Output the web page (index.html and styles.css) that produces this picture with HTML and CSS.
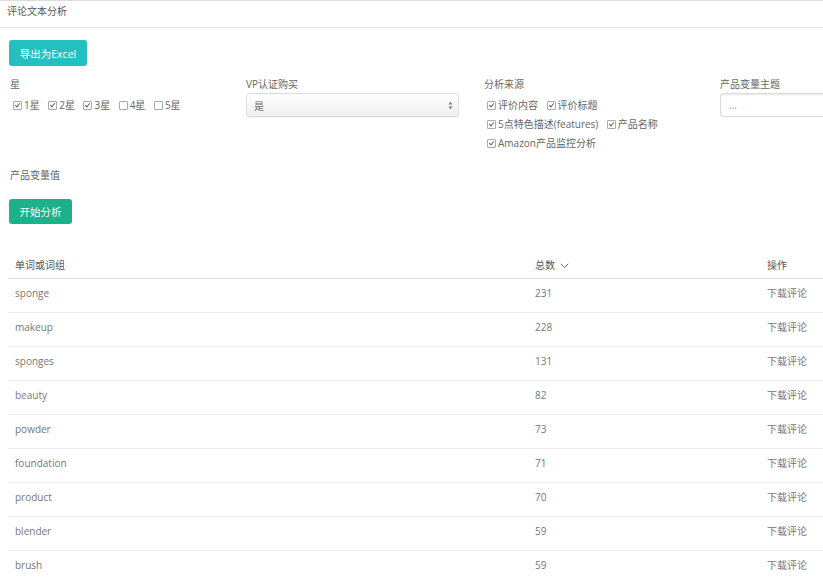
FILE: index.html
```html
<!DOCTYPE html>
<html lang="zh-CN">
<head>
  <meta charset="UTF-8">
  <title>评论文本分析</title>
  <link rel="stylesheet" href="styles.css">
</head>
<body>

  <div class="page-title">评论文本分析</div>

  <div class="toolbar">
    <button class="btn btn-export">导出为Excel</button>
  </div>

  <div class="filters">
    <div class="field">
      <div class="label">星</div>
      <div class="checks">
        <span class="check on"><i></i>1星</span>
        <span class="check on"><i></i>2星</span>
        <span class="check on"><i></i>3星</span>
        <span class="check"><i></i>4星</span>
        <span class="check"><i></i>5星</span>
      </div>
    </div>
    <div class="field">
      <div class="label">VP认证购买</div>
      <div class="select">
        <span>是</span>
        <svg width="5" height="9" viewBox="0 0 5 9"><path d="M0.5 3.5 L2.5 0.8 L4.5 3.5 Z M0.5 5.5 L2.5 8.2 L4.5 5.5 Z" fill="#777"/></svg>
      </div>
    </div>
    <div class="field">
      <div class="label">分析来源</div>
      <div class="checks wrap">
        <span class="check on"><i></i>评价内容</span>
        <span class="check on"><i></i>评价标题</span>
        <span class="check on"><i></i>5点特色描述(features)</span>
        <span class="check on"><i></i>产品名称</span>
        <span class="check on"><i></i>Amazon产品监控分析</span>
      </div>
    </div>
    <div class="field">
      <div class="label">产品变量主题</div>
      <div class="text-input">...</div>
    </div>
  </div>

  <div class="field single">
    <div class="label">产品变量值</div>
  </div>

  <div class="toolbar start">
    <button class="btn btn-start">开始分析</button>
  </div>

  <table class="result">
    <thead>
      <tr>
        <th class="col-word">单词或词组</th>
        <th class="col-count">总数 <svg width="9" height="6" viewBox="0 0 9 6"><path d="M0.8 0.8 L4.5 4.6 L8.2 0.8" fill="none" stroke="#666" stroke-width="1"/></svg></th>
        <th class="col-op">操作</th>
      </tr>
    </thead>
    <tbody>
      <tr><td>sponge</td><td>231</td><td>下载评论</td></tr>
      <tr><td>makeup</td><td>228</td><td>下载评论</td></tr>
      <tr><td>sponges</td><td>131</td><td>下载评论</td></tr>
      <tr><td>beauty</td><td>82</td><td>下载评论</td></tr>
      <tr><td>powder</td><td>73</td><td>下载评论</td></tr>
      <tr><td>foundation</td><td>71</td><td>下载评论</td></tr>
      <tr><td>product</td><td>70</td><td>下载评论</td></tr>
      <tr><td>blender</td><td>59</td><td>下载评论</td></tr>
      <tr><td>brush</td><td>59</td><td>下载评论</td></tr>
    </tbody>
  </table>

</body>
</html>
```

FILE: styles.css
```css
body {
  margin: 0;
  font-family: "Open Sans", "Noto Sans CJK SC", sans-serif;
  font-size: 10px;
  color: #666;
  background: #fff;
  overflow: hidden;
  width: 823px;
  height: 582px;
}
.page-title {
  height: 26px;
  line-height: 20px;
  padding-left: 7px;
  border-top: 1px solid #ddd;
  border-bottom: 1px solid #e6e6e6;
  color: #555;
}
.toolbar {
  padding: 12px 9px 0;
}
.toolbar.start {
  padding-top: 17px;
}
.btn {
  border: none;
  border-radius: 3px;
  color: #fff;
  font-family: inherit;
  font-size: 10.5px;
  padding: 0 10px;
  height: 26px;
  cursor: pointer;
}
.btn-export {
  background-color: #24bfc1;
  width: 78px;
}
.btn-start {
  background-color: #1cb08b;
  height: 25px;
  width: 63px;
  padding: 0;
}
.filters {
  display: grid;
  grid-template-columns: 236px 238px 236px 236px;
  padding: 11px 0 0 10px;
  width: 960px;
}
.label {
  color: #666;
  line-height: 14px;
}
.checks {
  margin-top: 7px;
  display: flex;
  flex-wrap: wrap;
  gap: 5px 8.5px;
  padding-left: 3px;
  line-height: 14px;
}
.checks.wrap {
  width: 195px;
}
.check {
  display: inline-flex;
  align-items: center;
  white-space: nowrap;
}
.check i {
  width: 7px;
  height: 7px;
  border: 1px solid #aaa;
  border-radius: 1px;
  margin-right: 2px;
  position: relative;
}
.check.on i::after {
  content: "";
  position: absolute;
  left: 2px;
  top: 0;
  width: 2px;
  height: 4px;
  border: solid #666;
  border-width: 0 1px 1px 0;
  transform: rotate(40deg);
}
.select {
  margin-top: 2px;
  width: 213px;
  height: 24px;
  border: 1px solid #dcdcdc;
  border-radius: 3px;
  background: linear-gradient(#fff, #eee);
  display: flex;
  align-items: center;
  justify-content: space-between;
  padding: 0 5px 0 7px;
  box-sizing: border-box;
  box-shadow: 0 1px 1px rgba(0,0,0,0.06);
}
.text-input {
  margin-top: 2px;
  width: 213px;
  height: 24px;
  line-height: 22px;
  border: 1px solid #dcdcdc;
  border-radius: 3px;
  box-shadow: inset 0 1px 2px rgba(0,0,0,0.1);
  box-sizing: border-box;
  padding-left: 8px;
  color: #999;
}
.single {
  padding: 18px 0 0 10px;
}
.result {
  margin: 27px 0 0 8px;
  border-collapse: collapse;
  width: 830px;
}
.result th {
  font-weight: normal;
  text-align: left;
  color: #555;
  height: 27px;
  padding: 0 0 0 7px;
  border-bottom: 1px solid #ddd;
}
.result th svg {
  vertical-align: middle;
  margin-left: 2px;
}
.result td {
  color: #777;
  line-height: 14px;
  padding: 7px 0 12px 7px;
  border-bottom: 1px solid #eee;
}
.col-word {
  width: 513px;
}
.col-count {
  width: 225px;
}
```
